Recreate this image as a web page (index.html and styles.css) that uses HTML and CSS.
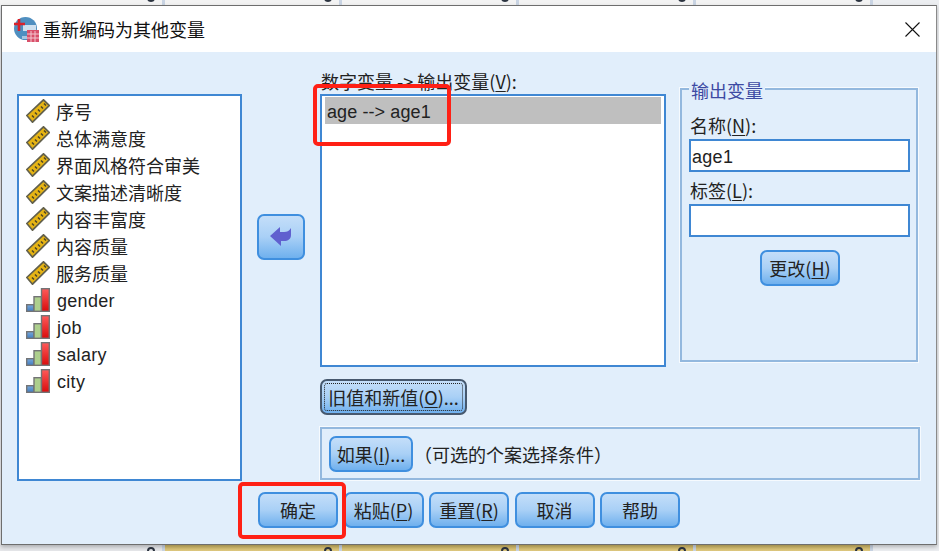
FILE: index.html
```html
<!DOCTYPE html>
<html lang="en">
<head>
    <meta charset="UTF-8">
    <meta name="viewport" content="width=device-width, initial-scale=1.0">
    <link rel="stylesheet" href="styles.css">
    <title>重新编码为其他变量</title>
</head>
<body>
    <svg width="0" height="0" class="defs">
        <defs>
            <linearGradient id="redbar" x1="0" x2="0" y1="0" y2="1">
                <stop offset="0" stop-color="#ff5a5a"/>
                <stop offset="1" stop-color="#d80c0c"/>
            </linearGradient>
            <linearGradient id="bluebar" x1="0" x2="0" y1="0" y2="1">
                <stop offset="0" stop-color="#79a9dc"/>
                <stop offset="1" stop-color="#3f7cc0"/>
            </linearGradient>
            <symbol id="ruler" viewBox="0 0 24 24">
                <path d="M.8 16.5 17.5 .8 23.2 6.5 6.5 23.2Z" fill="#e6b414" stroke="#62604c" stroke-width="1.7"/>
                <path d="M6 16.5l2 2M9 13.5l2 2M12 10.5l2 2M15 7.500l2 2M18 4.500l2 2" stroke="#4a4326" stroke-width="1.5"/>
            </symbol>
            <symbol id="bars" viewBox="0 0 24 24">
                <rect x="0.7" y="16.700" width="7.300" height="6.600" fill="url(#bluebar)" stroke="#737476" stroke-width="1.400"/>
                <rect x="8" y="8.700" width="7.500" height="14.600" fill="#adcf8d" stroke="#737476" stroke-width="1.400"/>
                <rect x="15.500" y="0.700" width="7.800" height="22.600" fill="url(#redbar)" stroke="#737476" stroke-width="1.400"/>
            </symbol>
        </defs>
    </svg>

    <div class="sheet-row sheet-top">
        <div class="sheet-cell first"><span class="digit"></span></div>
        <div class="sheet-cell"><span class="digit"></span></div>
        <div class="sheet-cell"><span class="digit"></span></div>
        <div class="sheet-cell"><span class="digit"></span></div>
        <div class="sheet-cell"><span class="digit"></span></div>
    </div>

    <div class="window">
        <div class="titlebar">
            <svg class="app-icon" width="25" height="25" viewBox="0 0 25 25">
                <circle cx="11.500" cy="11.500" r="11.500" fill="#4f8fc0"/>
                <path d="M9 8h13v6H9z" fill="#cfe0ef"/>
                <path d="M8 19h5v3H8z" fill="#a9c6e0"/>
                <path d="M5 2v12M0 7h11" stroke="#d8222c" stroke-width="2.600"/>
                <path d="M13 13h12v12H13z" fill="#d9506a"/>
                <path d="M13 17h12M13 21h12M17 14v11M21 14v11" stroke="#f3c6cf"/>
            </svg>
            <span class="title-text">重新编码为其他变量</span>
            <svg class="close" width="15" height="15" viewBox="0 0 15 15">
                <path d="M.5.5l14 14M14.500.5l-14 14" stroke="#111" stroke-width="1.100" fill="none"/>
            </svg>
        </div>

        <div class="dialog">
            <div class="main">
                <ul class="var-list">
                    <li><svg class="var-icon"><use href="#ruler"/></svg>序号</li>
                    <li><svg class="var-icon"><use href="#ruler"/></svg>总体满意度</li>
                    <li><svg class="var-icon"><use href="#ruler"/></svg>界面风格符合审美</li>
                    <li><svg class="var-icon"><use href="#ruler"/></svg>文案描述清晰度</li>
                    <li><svg class="var-icon"><use href="#ruler"/></svg>内容丰富度</li>
                    <li><svg class="var-icon"><use href="#ruler"/></svg>内容质量</li>
                    <li><svg class="var-icon"><use href="#ruler"/></svg>服务质量</li>
                    <li class="latin"><svg class="var-icon"><use href="#bars"/></svg><span>gender</span></li>
                    <li class="latin"><svg class="var-icon"><use href="#bars"/></svg><span>job</span></li>
                    <li class="latin"><svg class="var-icon"><use href="#bars"/></svg><span>salary</span></li>
                    <li class="latin"><svg class="var-icon"><use href="#bars"/></svg><span>city</span></li>
                </ul>

                <div class="arrow-col">
                    <button class="btn arrow-btn">
                        <svg width="22" height="20" viewBox="0 0 22 20">
                            <path d="M0 9 10 0v5h4c3 0 5-1 7-4v7c0 4-3 6-7 6h-3v5Z" fill="#6060cf"/>
                        </svg>
                    </button>
                </div>

                <div class="right-col">
                    <div class="top-row">
                        <div class="target">
                            <div class="target-label">数字变量 -&gt; 输出变量(<u>V</u>):</div>
                            <div class="target-list">
                                <div class="target-row">age --&gt; age1</div>
                            </div>
                        </div>

                        <div class="output-box">
                            <div class="legend">输出变量</div>
                            <label class="field-label">名称(<u>N</u>):</label>
                            <div class="text-field">age1</div>
                            <label class="field-label second">标签(<u>L</u>):</label>
                            <div class="text-field"></div>
                            <button class="btn change-btn">更改(<u>H</u>)</button>
                        </div>
                    </div>

                    <button class="btn values-btn"><span class="focus-ring">旧值和新值(<u>O</u>)...</span></button>

                    <div class="if-panel">
                        <button class="btn if-btn">如果(<u>I</u>)...</button>
                        <span class="if-text">（可选的个案选择条件）</span>
                    </div>
                </div>
            </div>

            <div class="footer">
                <button class="btn foot-btn">确定</button>
                <button class="btn foot-btn">粘贴(<u>P</u>)</button>
                <button class="btn foot-btn">重置(<u>R</u>)</button>
                <button class="btn foot-btn">取消</button>
                <button class="btn foot-btn">帮助</button>
            </div>
        </div>
    </div>

    <div class="sheet-row sheet-bottom">
        <div class="sheet-cell first"><span class="digit"></span></div>
        <div class="sheet-cell"><span class="digit"></span></div>
        <div class="sheet-cell"><span class="digit"></span></div>
        <div class="sheet-cell"><span class="digit"></span></div>
        <div class="sheet-cell"><span class="digit"></span></div>
    </div>

    <!-- red annotations drawn over the dialog -->
    <div class="mark mark-target"></div>
    <div class="mark mark-ok"></div>
</body>
</html>
```

FILE: styles.css
```css
* {
    box-sizing: border-box;
}

body {
    margin: 0;
    height: 551px;
    overflow: hidden;
    position: relative;
    font-family: "Liberation Sans", "Noto Sans CJK SC", sans-serif;
    font-size: 18px;
    color: #222;
    background-color: #eceef1;
}

.defs {
    position: absolute;
}

/* the data sheet that peeks out above and below the dialog */
.sheet-row {
    display: flex;
    height: 5px;
    overflow: hidden;
}

.sheet-bottom {
    height: 6px;
}

.sheet-cell {
    flex: none;
    width: 177px;
    display: flex;
    justify-content: flex-end;
    padding-right: 7px;
    border-right: 3px solid #c9d4e3;
}

.sheet-cell.first {
    width: 165px;
}

/* only the clipped edge of each cell's number shows */
.digit {
    flex: none;
    width: 8px;
    height: 11px;
    border: 2px solid #2c3440;
    border-radius: 4px;
}

.sheet-top .sheet-cell {
    background-color: #f3f3f3;
}

.sheet-top .digit {
    margin-top: -9px;
}

.sheet-bottom .sheet-cell {
    background: linear-gradient(#cfb765, #dfc980);
}

.sheet-bottom .sheet-cell.first {
    background: #e6e7ea;
}

.sheet-bottom .digit {
    margin-top: 2px;
}

.window {
    width: 936px;
    height: 540px;
    margin-left: 1px;
    border: 1px solid #6e6e6e;
    border-right-color: #8a8a8a;
    background-color: #e1eefb;
    box-shadow: 0 2px 4px rgba(0, 0, 0, 0.25);
    position: relative;
}

.titlebar {
    height: 46px;
    background-color: #fff;
    display: flex;
    align-items: center;
    padding: 0 16px 0 12px;
}

.app-icon {
    margin-right: 4px;
}

.title-text {
    font-family: "Noto Sans CJK SC", sans-serif;
    font-size: 18px;
    color: #111;
}

.close {
    margin-left: auto;
}

.dialog {
    padding-left: 15px;
}

.main {
    display: flex;
    height: 429px;
}

.var-list {
    list-style: none;
    margin: 42px 0 0;
    padding: 1px 0 0 7px;
    width: 225px;
    height: 387px;
    background-color: #fff;
    border: 2px solid #3f87d3;
    font-family: "Noto Sans CJK SC", sans-serif;
}

.var-list li {
    display: flex;
    align-items: center;
    height: 27px;
    white-space: nowrap;
}

.var-list .latin {
    font-family: "Liberation Sans", sans-serif;
    font-size: 18px;
    letter-spacing: 0.3px;
}

.latin span {
    margin: 4px 0 0 1px;
}

.var-icon {
    width: 24px;
    height: 24px;
    margin-right: 6px;
    flex: none;
}

.arrow-col {
    width: 78px;
    padding: 162px 0 0 15px;
}

.btn {
    font-family: "Noto Sans CJK SC", "Liberation Sans", sans-serif;
    font-size: 18px;
    color: #222;
    padding: 0;
    border: 2px solid #3f8fdf;
    border-radius: 7px;
    background: linear-gradient(#c4def9, #a9d0f6 50%, #6fb0ee);
    display: flex;
    align-items: center;
    justify-content: center;
    white-space: nowrap;
}

.arrow-btn {
    width: 48px;
    height: 46px;
}

.right-col {
    width: 600px;
}

.top-row {
    display: flex;
    gap: 14px;
    height: 315px;
}

.target {
    width: 346px;
}

.target-label {
    height: 42px;
    padding: 16px 0 0 1px;
    line-height: 26px;
    white-space: nowrap;
    font-family: "Noto Sans CJK SC", sans-serif;
    font-size: 18px;
}

.target-list {
    height: 273px;
    background-color: #fff;
    border: 2px solid #3f87d3;
    padding: 1px 3px;
}

.target-row {
    height: 27px;
    line-height: 30px;
    padding-left: 2px;
    background-color: #bfbfbf;
    font-size: 18px;
    letter-spacing: 0.1px;
}

.output-box {
    position: relative;
    width: 238px;
    height: 274px;
    margin-top: 36px;
    padding: 23px 7px 0 7px;
    border: 2px solid #93b8de;
    box-shadow: 0 0 0 1px rgba(255, 255, 255, 0.7);
}

.legend {
    position: absolute;
    top: -10px;
    left: 7px;
    padding: 0 2px;
    line-height: 20px;
    background-color: #e1eefb;
    color: #3d4aa3;
    font-family: "Noto Sans CJK SC", sans-serif;
}

.field-label {
    display: block;
    height: 26px;
    line-height: 24px;
    padding-left: 1px;
    font-family: "Noto Sans CJK SC", sans-serif;
    font-size: 18px;
}

.field-label.second {
    margin-top: 6px;
}

.text-field {
    width: 221px;
    height: 33px;
    line-height: 32px;
    padding-left: 1px;
    background-color: #fff;
    border: 2px solid #3f87d3;
    letter-spacing: 0.3px;
}

.change-btn {
    width: 80px;
    height: 36px;
    margin: 13px 0 0 71px;
}

.values-btn {
    width: 147px;
    height: 36px;
    margin-top: 12px;
    padding: 2px;
    border-color: #46586e;
}

.focus-ring {
    display: block;
    width: 100%;
    height: 100%;
    line-height: 26px;
    border: 1px dotted #222;
    border-radius: 3px;
}

.if-panel {
    display: flex;
    align-items: center;
    height: 53px;
    margin-top: 12px;
    padding-left: 7px;
    border: 2px solid #93b8de;
    box-shadow: 0 0 0 1px rgba(255, 255, 255, 0.7);
}

.if-btn {
    width: 84px;
    height: 36px;
}

.if-text {
    margin-left: 1px;
    font-family: "Noto Sans CJK SC", sans-serif;
    font-size: 18px;
}

.footer {
    display: flex;
    gap: 5.5px;
    padding: 11px 0 0 241px;
}

.foot-btn {
    width: 80px;
    height: 36px;
}

.mark {
    position: absolute;
    border: 4px solid #ff2015;
    border-radius: 5px;
}

.mark-target {
    left: 313px;
    top: 84px;
    width: 138px;
    height: 62px;
}

.mark-ok {
    left: 238px;
    top: 482px;
    width: 108px;
    height: 57px;
}

u {
    text-underline-offset: 2px;
}
```
